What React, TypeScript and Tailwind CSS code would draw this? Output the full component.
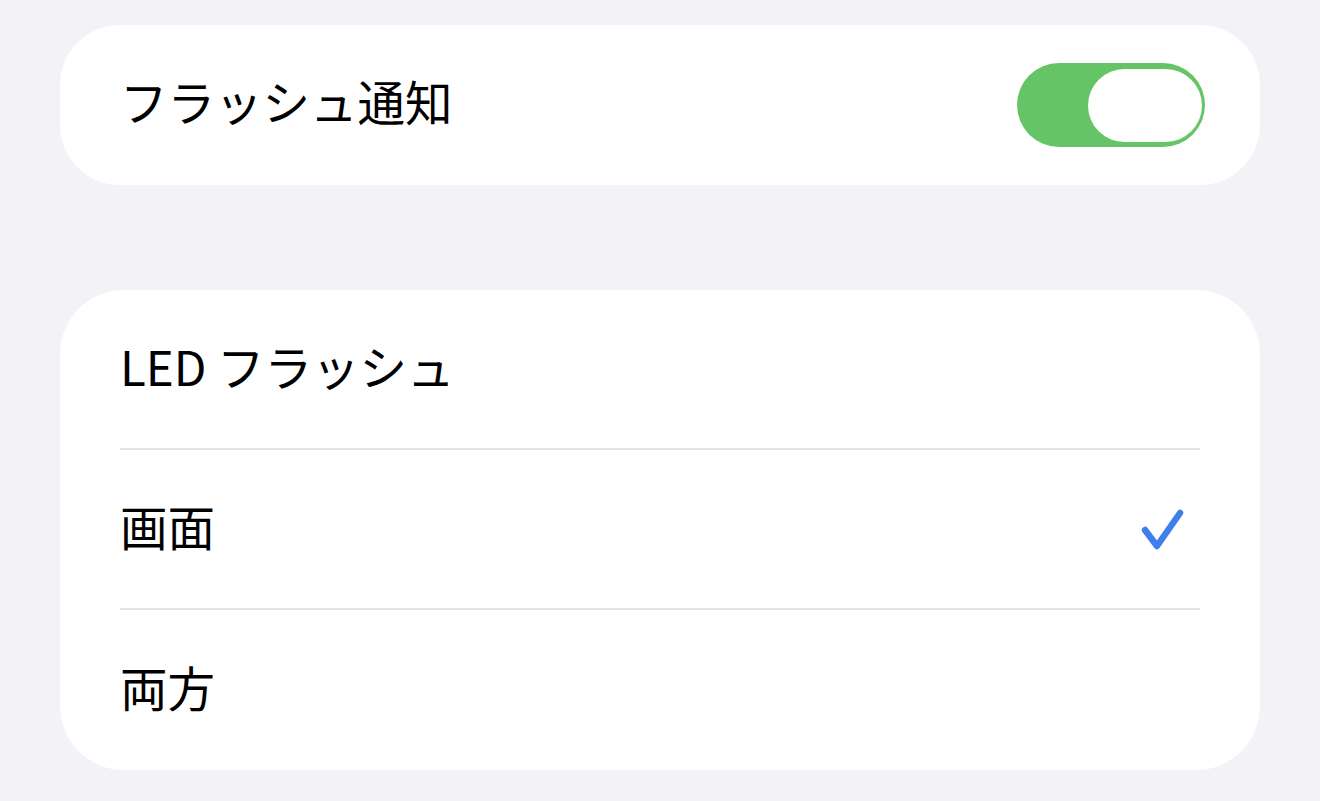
export default function App() {
  const options = [
    { label: 'LED フラッシュ', checked: false },
    { label: '画面', checked: true },
    { label: '両方', checked: false },
  ];

  return (
    <div
      className="min-h-screen bg-[#f2f2f7] px-[60px] pt-[25px] pb-[31px] text-black"
      style={{ fontFamily: '"Noto Sans CJK JP", "Noto Sans", sans-serif' }}
    >
      <div className="h-[160px] bg-white rounded-[60px] pl-[60px] pr-[55px] flex items-center justify-between">
        <span className="text-[47.5px] leading-none pb-[8px]">フラッシュ通知</span>
        <div className="w-[188px] h-[84px] rounded-full bg-[#65c466] flex items-center justify-end pr-[3px]">
          <div className="w-[114px] h-[73px] rounded-full bg-white"></div>
        </div>
      </div>

      <div className="mt-[105px] bg-white rounded-[64px] px-[60px]">
        {options.map((opt, idx) => (
          <div
            key={opt.label}
            className={
              idx < options.length - 1
                ? 'h-[160px] flex items-center justify-between border-b-2 border-[#e3e3e8]'
                : 'h-[160px] flex items-center justify-between'
            }
          >
            <span className="text-[47.5px] leading-none pb-[6px]">{opt.label}</span>
            {opt.checked && (
              <svg width="50" height="46" viewBox="0 0 50 46" className="mr-[14px]">
                <path
                  d="M9 24 L21 40 L44 7"
                  fill="none"
                  stroke="#3d80ec"
                  strokeWidth="6.5"
                  strokeLinecap="round"
                  strokeLinejoin="round"
                />
              </svg>
            )}
          </div>
        ))}
      </div>
    </div>
  );
}
